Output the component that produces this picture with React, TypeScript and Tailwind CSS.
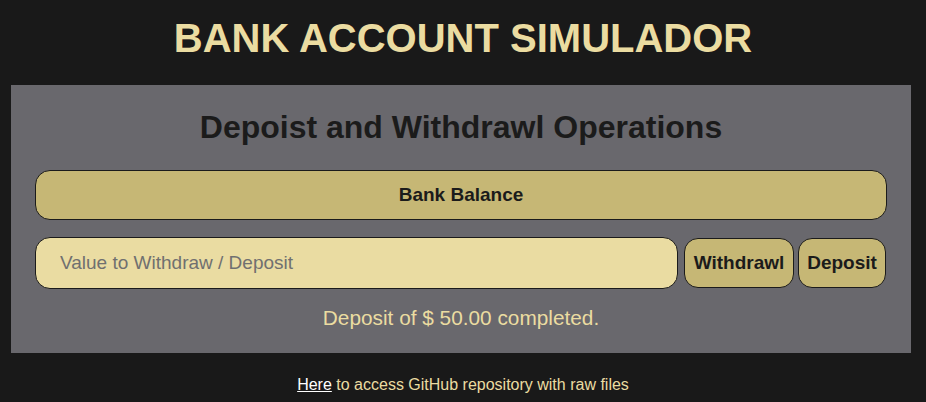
import React from "react";

export default function App() {
  return (
    <div
      className="min-h-[402px] w-full bg-[#191919] flex flex-col"
      style={{ fontFamily: '"Liberation Sans", Arial, sans-serif' }}
    >
      <h1 className="pt-[15px] text-center text-[40px] leading-[46px] font-bold text-[#ebdca1]">
        BANK ACCOUNT SIMULADOR
      </h1>
      <div className="mt-[24px] ml-[11px] w-[900px] bg-[#69686d] px-[24px] pt-[24px] pb-[23px] flex flex-col">
        <h2 className="text-center text-[32px] leading-[37px] font-bold text-[#1b1b1b]">
          Depoist and Withdrawl Operations
        </h2>
        <div className="mt-[24px] h-[50px] w-full rounded-[15px] border border-[#1b1b1b] bg-[#c6b775] flex items-center justify-center pt-[1px] text-[19px] font-bold text-[#1b1b1b]">
          Bank Balance
        </div>
        <div className="mt-[17px] flex items-center">
          <input
            className="h-[52px] w-[643px] rounded-[15px] border border-[#1b1b1b] bg-[#eadca2] pl-[24px] text-[19px] text-[#1b1b1b] placeholder:text-[#707070] outline-none"
            placeholder="Value to Withdraw / Deposit"
            style={{ fontFamily: '"Liberation Sans", Arial, sans-serif' }}
          />
          <button className="ml-[6px] h-[50px] w-[110px] rounded-[14px] border border-[#1b1b1b] bg-[#c6b775] text-[19px] font-bold text-[#1b1b1b]">
            Withdrawl
          </button>
          <button className="ml-[4px] h-[50px] w-[88px] rounded-[14px] border border-[#1b1b1b] bg-[#c6b775] text-[19px] font-bold text-[#1b1b1b]">
            Deposit
          </button>
        </div>
        <p className="mt-[17px] text-center text-[20.8px] leading-[24px] text-[#ebdca1]">
          Deposit of $ 50.00 completed.
        </p>
      </div>
      <p className="mt-[23px] text-center text-[16px] leading-[18px] text-[#ebdca1]">
        <a href="#" className="text-white underline">Here</a> to access GitHub repository with raw files
      </p>
    </div>
  );
}
